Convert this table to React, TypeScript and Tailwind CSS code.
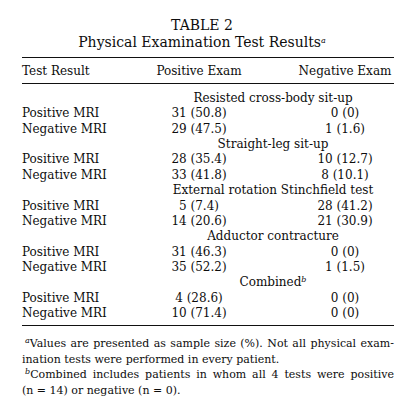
const sections = [
  { title: 'Resisted cross-body sit-up', pos: ['31 (50.8)', '0 (0)'], neg: ['29 (47.5)', '1 (1.6)'] },
  { title: 'Straight-leg sit-up', pos: ['28 (35.4)', '10 (12.7)'], neg: ['33 (41.8)', '8 (10.1)'] },
  { title: 'External rotation Stinchfield test', pos: ['5 (7.4)', '28 (41.2)'], neg: ['14 (20.6)', '21 (30.9)'] },
  { title: 'Adductor contracture', pos: ['31 (46.3)', '0 (0)'], neg: ['35 (52.2)', '1 (1.5)'] },
  { title: 'Combined', sup: 'b', pos: ['4 (28.6)', '0 (0)'], neg: ['10 (71.4)', '0 (0)'] },
];

function Row({ label, values }: { label: string; values: string[] }) {
  return (
    <>
      <div>{label}</div>
      <div className="text-center">{values[0]}</div>
      <div className="text-center pl-[38px]">{values[1]}</div>
    </>
  );
}

export default function App() {
  return (
    <div
      className="w-[404px] h-[405px] bg-white text-[#0d0d0d] pt-[17px]"
      style={{ fontFamily: '"DejaVu Serif", serif' }}
    >
      <div className="text-center text-[14px] leading-[17px]">TABLE 2</div>
      <div className="text-center text-[14px] leading-[17px]">
        Physical Examination Test Results<sup className="italic text-[8px]">a</sup>
      </div>

      <div className="mx-[22px] mt-[6px] w-[372px] text-[12px]">
        <div className="border-t border-[#111] border-b pt-[6px] pb-[4px] grid grid-cols-[118px_118px_136px] leading-[15px]">
          <div>Test Result</div>
          <div className="text-center">Positive Exam</div>
          <div className="text-center pl-[38px]">Negative Exam</div>
        </div>

        <div className="grid grid-cols-[118px_118px_136px] leading-[15.36px] pt-[7px] pb-[4px] border-b border-[#111]">
          {sections.map((s) => (
            <div key={s.title} className="contents">
              <div className="col-start-2 col-span-2 text-center pl-3">
                {s.title}
                {s.sup && <sup className="italic text-[8px]">{s.sup}</sup>}
              </div>
              <Row label="Positive MRI" values={s.pos} />
              <Row label="Negative MRI" values={s.neg} />
            </div>
          ))}
        </div>

        <div className="pt-[10px] text-[11px] leading-[15.4px] text-justify">
          <p className="indent-[3px]">
            <sup className="italic text-[8px]">a</sup>Values are presented as sample size (%). Not all physical exam&shy;ination
            tests were performed in every patient.
          </p>
          <p className="indent-[3px]">
            <sup className="italic text-[8px]">b</sup>Combined includes patients in whom all 4 tests were positive
            (n&nbsp;=&nbsp;14) or negative (n&nbsp;=&nbsp;0).
          </p>
        </div>
      </div>
    </div>
  );
}
